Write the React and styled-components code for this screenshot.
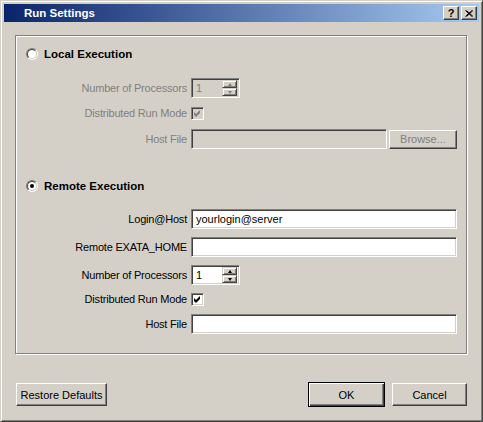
import React from "react";
import styled, { createGlobalStyle, css } from "styled-components";

const GlobalStyle = createGlobalStyle`
    body{
        margin:0;
        background:#ffffff;
    }
    *{
        box-sizing:border-box;
    }
`;

const face = "#d4d0c8";
const shadow = "#808080";
const dark = "#404040";

let Window = styled.div`
    width:483px;
    height:422px;
    display:flex;
    flex-direction:column;
    padding:3px;
    background:${face};
    border:1px solid;
    border-color:${face} ${dark} ${dark} ${face};
    box-shadow:inset 1px 1px #ffffff, inset -1px -1px ${shadow};
    font-family:"Liberation Sans", Arial, sans-serif;
    font-size:11px;
    color:#000;
`;

let TitleBar = styled.div`
    height:18px;
    display:flex;
    align-items:center;
    padding:0 2px 0 20px;
    background:linear-gradient(to right, #0a246a 0%, #a6caf0 100%);
`;

let Title = styled.span`
    flex:1;
    color:#fff;
    font-weight:bold;
    font-size:11.5px;
`;

let CaptionButton = styled.div`
    width:16px;
    height:14px;
    margin-left:2px;
    display:flex;
    align-items:center;
    justify-content:center;
    background:${face};
    border:1px solid;
    border-color:#fff ${dark} ${dark} #fff;
    box-shadow:inset -1px -1px ${shadow};
    font-weight:bold;
    font-size:11px;
    line-height:11px;
`;

let Body = styled.div`
    flex:1;
    display:flex;
    flex-direction:column;
    padding:13px 12px 0 11px;
`;

let GroupBox = styled.div`
    height:319px;
    border:1px solid ${shadow};
    box-shadow:inset 1px 1px #fff, 1px 1px #fff;
    padding:12px 9px 0 0;
`;

let RadioRow = styled.div`
    display:flex;
    align-items:center;
    height:12px;
    padding-left:10px;
    margin-top:${props => props.$top || 0}px;
    margin-bottom:${props => props.$bottom}px;
    gap:6px;
    font-weight:bold;
    font-size:11.5px;
`;

let RadioOuter = styled.span`
    width:12px;
    height:12px;
    border-radius:50%;
    border:1px solid;
    border-color:${shadow} #fff #fff ${shadow};
    display:flex;
`;

let RadioInner = styled.span`
    flex:1;
    border-radius:50%;
    border:1px solid;
    border-color:${dark} ${face} ${face} ${dark};
    background:#fff;
    display:flex;
    align-items:center;
    justify-content:center;
    &::after{
        content:"";
        width:4px;
        height:4px;
        border-radius:50%;
        background:${props => props.$checked ? "#000" : "transparent"};
    }
`;

let FieldGrid = styled.div`
    display:grid;
    grid-template-columns:171px 1fr;
    column-gap:4px;
    row-gap:${props => props.$gap}px;
    align-items:center;
`;

let Label = styled.span`
    text-align:right;
    line-height:13px;
    letter-spacing:-0.2px;
    color:${props => props.$disabled ? shadow : "#000"};
`;

const sunken = css`
    border:1px solid;
    border-color:${shadow} #fff #fff ${shadow};
    box-shadow:inset 1px 1px ${dark}, inset -1px -1px ${face};
`;

let Field = styled.div`
    ${sunken};
    height:20px;
    flex:1;
    display:flex;
    align-items:center;
    padding-left:4px;
    background:${props => props.$disabled ? face : "#fff"};
    color:${props => props.$disabled ? shadow : "#000"};
`;

let SpinBox = styled(Field)`
    width:49px;
    flex:none;
    justify-content:space-between;
    padding:2px 2px 2px 4px;
`;

let SpinButtons = styled.div`
    width:15px;
    height:16px;
    display:flex;
    flex-direction:column;
`;

let SpinButton = styled.div`
    flex:1;
    display:flex;
    align-items:center;
    justify-content:center;
    background:${face};
    border:1px solid;
    border-color:${face} ${dark} ${dark} ${face};
    box-shadow:inset 1px 1px #fff, inset -1px -1px ${shadow};
    &::after{
        content:"";
        border-left:2.5px solid transparent;
        border-right:2.5px solid transparent;
        ${props => props.$down
            ? `border-top:3px solid ${props.$disabled ? shadow : "#000"};`
            : `border-bottom:3px solid ${props.$disabled ? shadow : "#000"};`}
    }
`;

let CheckBox = styled.div`
    ${sunken};
    width:13px;
    height:13px;
    display:flex;
    align-items:center;
    justify-content:center;
    background:${props => props.$disabled ? face : "#fff"};
`;

let Row = styled.div`
    display:flex;
    align-items:center;
    gap:2px;
`;

let Button = styled.div`
    width:${props => props.$width}px;
    height:23px;
    display:flex;
    align-items:center;
    justify-content:center;
    background:${face};
    border:1px solid;
    border-color:#fff ${dark} ${dark} #fff;
    box-shadow:inset -1px -1px ${shadow};
    color:${props => props.$disabled ? shadow : "#000"};
    ${props => props.$default && css`
        height:25px;
        border:1px solid #000;
        box-shadow:inset 1px 1px #fff, inset -1px -1px ${dark}, inset -2px -2px ${shadow};
    `}
`;

let BrowseButton = styled(Button)`
    height:19px;
`;

let ButtonRow = styled.div`
    display:flex;
    align-items:center;
    height:25px;
    margin-top:28px;
    padding-left:1px;
    gap:7px;
`;

let Spacer = styled.div`
    flex:1;
`;

let Check = ({ color }) => (
    <svg width="9" height="9" viewBox="0 0 9 9">
        <path d="M1 3 L3 5 L7 1 L7 4 L3 8 L1 6 Z" fill={color} />
    </svg>
);

let Radio = ({ checked }) => (
    <RadioOuter>
        <RadioInner $checked={checked} />
    </RadioOuter>
);

let Spin = ({ disabled }) => (
    <SpinBox $disabled={disabled}>
        <span>1</span>
        <SpinButtons>
            <SpinButton $disabled={disabled} />
            <SpinButton $down $disabled={disabled} />
        </SpinButtons>
    </SpinBox>
);

export default function App() {
    return (
        <>
            <GlobalStyle />
            <Window>
                <TitleBar>
                    <Title>Run Settings</Title>
                    <CaptionButton>?</CaptionButton>
                    <CaptionButton>
                        <svg width="8" height="7" viewBox="0 0 8 7">
                            <path d="M0.5 0.5 L7 6.5 M1.5 0.5 L8 6.5 M7 0.5 L0.5 6.5 M8 0.5 L1.5 6.5" stroke="#000" strokeWidth="1" />
                        </svg>
                    </CaptionButton>
                </TitleBar>
                <Body>
                    <GroupBox>
                        <RadioRow $bottom={18}>
                            <Radio />
                            <span>Local Execution</span>
                        </RadioRow>
                        <FieldGrid $gap={9}>
                            <Label $disabled>Number of Processors</Label>
                            <Row><Spin disabled /></Row>
                            <Label $disabled>Distributed Run Mode</Label>
                            <Row>
                                <CheckBox $disabled><Check color={shadow} /></CheckBox>
                            </Row>
                            <Label $disabled>Host File</Label>
                            <Row>
                                <Field $disabled />
                                <BrowseButton $width={68} $disabled>Browse...</BrowseButton>
                            </Row>
                        </FieldGrid>
                        <RadioRow $top={31} $bottom={17}>
                            <Radio checked />
                            <span>Remote Execution</span>
                        </RadioRow>
                        <FieldGrid $gap={8}>
                            <Label>Login@Host</Label>
                            <Field>yourlogin@server</Field>
                            <Label>Remote EXATA_HOME</Label>
                            <Field />
                            <Label>Number of Processors</Label>
                            <Row><Spin /></Row>
                            <Label>Distributed Run Mode</Label>
                            <Row>
                                <CheckBox><Check color="#000" /></CheckBox>
                            </Row>
                            <Label>Host File</Label>
                            <Field />
                        </FieldGrid>
                    </GroupBox>
                    <ButtonRow>
                        <Button $width={91}>Restore Defaults</Button>
                        <Spacer />
                        <Button $width={77} $default>OK</Button>
                        <Button $width={75}>Cancel</Button>
                    </ButtonRow>
                </Body>
            </Window>
        </>
    );
}
